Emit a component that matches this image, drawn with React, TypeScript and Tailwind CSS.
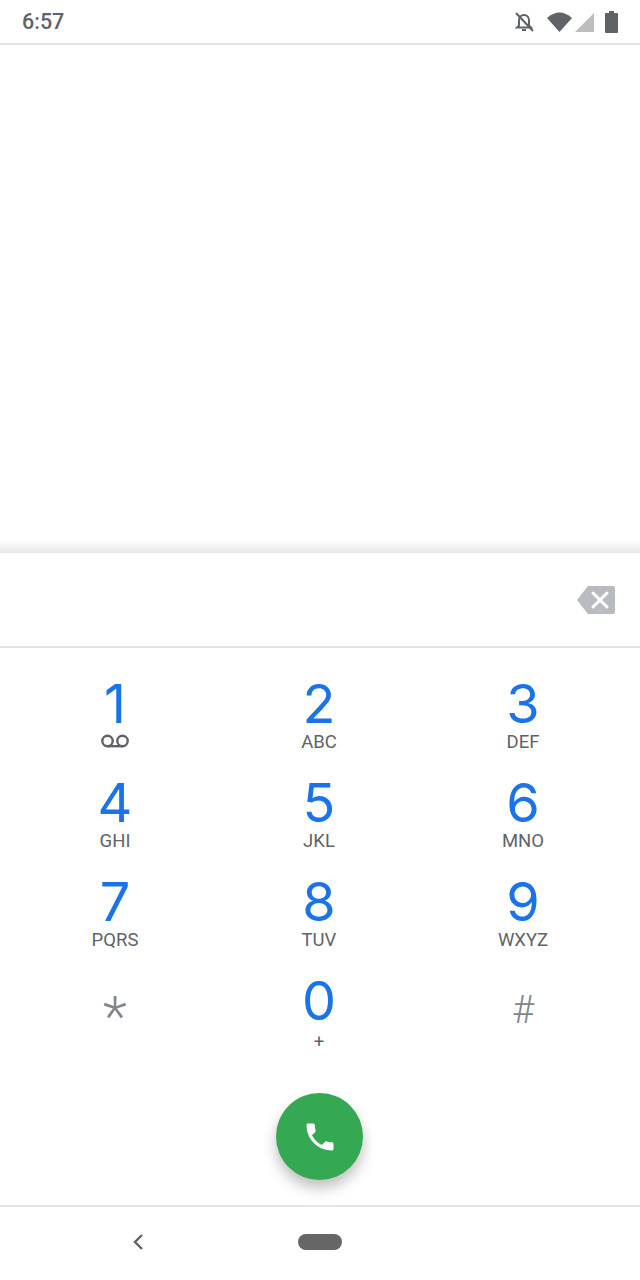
import React from 'react';

const keys = [
  { digit: '1', sub: 'voicemail' },
  { digit: '2', sub: 'ABC' },
  { digit: '3', sub: 'DEF' },
  { digit: '4', sub: 'GHI' },
  { digit: '5', sub: 'JKL' },
  { digit: '6', sub: 'MNO' },
  { digit: '7', sub: 'PQRS' },
  { digit: '8', sub: 'TUV' },
  { digit: '9', sub: 'WXYZ' },
  { digit: '*', sub: '' },
  { digit: '0', sub: '+' },
  { digit: '#', sub: '' },
];

const Voicemail = () => (
  <svg width="30" height="14" viewBox="0 0 30 14" fill="none" stroke="#5f6368" strokeWidth="2.4">
    <circle cx="7.5" cy="7" r="5.2" />
    <circle cx="22.5" cy="7" r="5.2" />
    <path d="M7.5 12.2h15" />
  </svg>
);

const Key = ({ digit, sub }: { digit: string; sub: string }) => {
  if (digit === '*') {
    return (
      <div className="flex flex-col items-center h-[99px]">
        <span className="h-[74px] pt-[14px] flex items-center text-[#80868b] text-[56px] font-light leading-none">*</span>
      </div>
    );
  }
  if (digit === '#') {
    return (
      <div className="flex flex-col items-center h-[99px]">
        <span className="h-[74px] flex items-center text-[#80868b] text-[38px] font-light leading-none">#</span>
      </div>
    );
  }
  return (
    <div className="flex flex-col items-center h-[99px]">
      <span className="h-[56px] flex items-center text-[#1a73e8] text-[54px] font-normal leading-none font-['Inter',sans-serif]">{digit}</span>
      {sub === 'voicemail' ? (
        <span className="h-[18px] flex items-center"><Voicemail /></span>
      ) : sub === '+' ? (
        <span className="h-[18px] mt-[4px] flex items-center text-[#5f6368] text-[18.5px] leading-none">{sub}</span>
      ) : (
        <span className="h-[18px] mt-[1px] flex items-center text-[#5f6368] text-[18.5px] leading-none">{sub}</span>
      )}
    </div>
  );
};

export default function App() {
  return (
    <div className="w-[640px] h-[1280px] bg-white flex flex-col overflow-hidden font-['Roboto',sans-serif]">
      {/* Status bar */}
      <header className="h-[45px] shrink-0 border-b-2 border-[#e4e4e4] flex items-center justify-between pl-[22px] pr-[22px]">
        <span className="text-[#5f6368] text-[21.5px] font-medium pt-[1px]">6:57</span>
        <div className="flex items-center">
          <svg width="24" height="24" viewBox="0 0 24 24" fill="none" stroke="#5f6368" strokeWidth="2" className="mr-[11px]">
            <path d="M7 10.5c0-3 1.8-5.5 5-5.5s5 2.5 5 5.5v5l2 2H5l2-2z" />
            <path d="M10 20h4" />
            <path d="M4 3l17 18" />
          </svg>
          <div className="flex items-end gap-[3px] mr-[11px]">
            <svg width="25" height="20" viewBox="0 0 25 20" fill="#5f6368"><path d="M0 6 Q12.5 -5 25 6 L12.5 20Z" /></svg>
            <svg width="19" height="19" viewBox="0 0 19 19" fill="#bdbdbd"><path d="M19 0v19H0z" /></svg>
          </div>
          <svg width="13" height="22" viewBox="0 0 13 22" fill="#5f6368"><path d="M4 0h5v2h3a1 1 0 0 1 1 1v18a1 1 0 0 1-1 1H1a1 1 0 0 1-1-1V3a1 1 0 0 1 1-1h3z" /></svg>
        </div>
      </header>

      {/* Empty list area */}
      <div className="flex-1 bg-gradient-to-b from-white from-[97.5%] to-[#e8e8e8]" />

      {/* Number field */}
      <div className="h-[95px] shrink-0 border-b-2 border-[#e4e4e4] flex items-center justify-end pr-[25px]">
        <svg width="38" height="28" viewBox="0 0 38 28">
          <path d="M11 0h25a2 2 0 0 1 2 2v24a2 2 0 0 1-2 2H11L0 14z" fill="#b8bcc0" />
          <path d="M16 7l14 14M30 7L16 21" stroke="#fff" strokeWidth="3" strokeLinecap="round" />
        </svg>
      </div>

      {/* Keypad */}
      <div className="grid grid-cols-3 pl-[13px] pr-[15px] pt-[28px] shrink-0">
        {keys.map((k) => (
          <Key key={k.digit} digit={k.digit} sub={k.sub} />
        ))}
      </div>

      {/* Call button */}
      <div className="h-[135px] shrink-0 flex justify-center pt-[21px] pr-[1px] border-b-2 border-[#e4e4e4]">
        <button className="w-[87px] h-[87px] rounded-full bg-[#34a853] shadow-[0_8px_14px_rgba(0,0,0,0.25)] flex items-center justify-center">
          <svg width="36" height="36" viewBox="0 0 24 24" fill="#fff">
            <path d="M6.62 10.79c1.44 2.83 3.76 5.14 6.59 6.59l2.2-2.2c.27-.27.67-.36 1.02-.24 1.12.37 2.33.57 3.57.57.55 0 1 .45 1 1V20c0 .55-.45 1-1 1-9.39 0-17-7.61-17-17 0-.55.45-1 1-1h3.5c.55 0 1 .45 1 1 0 1.25.2 2.45.57 3.57.11.35.03.74-.25 1.02l-2.2 2.2z" />
          </svg>
        </button>
      </div>

      {/* Nav bar */}
      <nav className="h-[73px] shrink-0 relative flex items-center justify-center pb-[3px]">
        <svg width="14" height="20" viewBox="0 0 14 20" fill="none" stroke="#5f6368" strokeWidth="2.4" className="absolute left-[131px] top-[25px]">
          <path d="M11 3L4 10l7 7" />
        </svg>
        <div className="w-[44px] h-[16px] rounded-full bg-[#666666]" />
      </nav>
    </div>
  );
}
